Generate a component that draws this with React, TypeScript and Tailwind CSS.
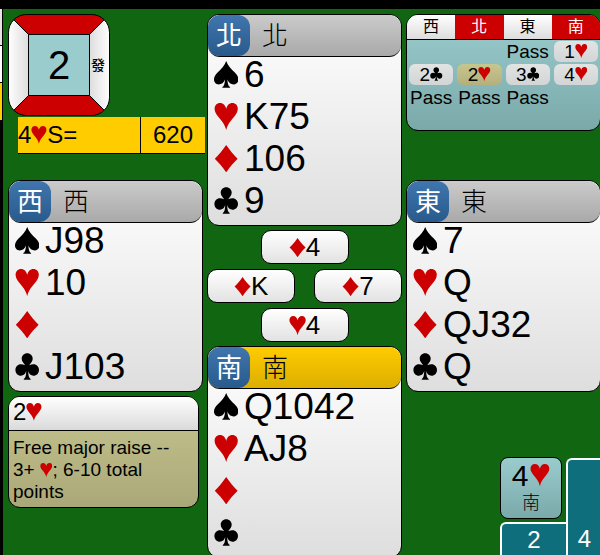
import React from 'react';

type Suit = 'S' | 'H' | 'D' | 'C';

const SUITS: Suit[] = ['S', 'H', 'D', 'C'];

const PIPS = {
  S: {
    label: 'spades',
    path: 'M12 0C13.5 4.5 17 7.5 20.5 11C22.8 13.3 24 15.3 24 17.6C24 20.3 22 22.3 19.4 22.3C16.6 22.3 14.2 20.6 13.2 17.6C13.3 21.5 14.2 24.2 15.8 24.7V25.5H8.2V24.7C9.8 24.2 10.7 21.5 10.8 17.6C9.8 20.6 7.4 22.3 4.6 22.3C2 22.3 0 20.3 0 17.6C0 15.3 1.2 13.3 3.5 11C7 7.5 10.5 4.5 12 0Z',
  },
  H: {
    label: 'hearts',
    path: 'M12 26C11 20.5 7.5 17 4.2 13C2 10.3 .6 8 .6 5.4C.6 2.3 2.8 0 6 0C9 0 11.2 2.2 12 5.6C12.8 2.2 15 0 18 0C21.2 0 23.4 2.3 23.4 5.4C23.4 8 22 10.3 19.8 13C16.5 17 13 20.5 12 26Z',
  },
  D: {
    label: 'diamonds',
    path: 'M12 0C15.5 5 19.5 9.5 23.2 13C19.5 16.5 15.5 21 12 26C8.5 21 4.5 16.5 .8 13C4.5 9.5 8.5 5 12 0Z',
  },
  C: {
    label: 'clubs',
    path: 'M12 .3C15.1 .3 17.4 2.6 17.4 5.5C17.4 7.9 15.7 9.5 14 11.6C15.5 10.9 16.8 10.6 18.2 10.6C21.3 10.6 23.6 13 23.6 16.1C23.6 19.3 21.2 21.6 18.2 21.6C15.6 21.6 13.7 20 13 17.2C13 21.3 13.8 24.2 15.4 24.8V25.5H8.6V24.8C10.2 24.2 11 21.3 11 17.2C10.3 20 8.4 21.6 5.8 21.6C2.8 21.6 .4 19.3 .4 16.1C.4 13 2.7 10.6 5.8 10.6C7.2 10.6 8.5 10.9 10 11.6C8.3 9.5 6.6 7.9 6.6 5.5C6.6 2.6 8.9 .3 12 .3Z',
  },
};

function Pip({ suit }: { suit: Suit }) {
  const red = suit === 'H' || suit === 'D';
  return (
    <svg
      viewBox="0 0 24 26"
      preserveAspectRatio="none"
      role="img"
      aria-label={PIPS[suit].label}
      className={
        red
          ? 'inline h-[0.74em] w-[0.66em] align-[-0.04em] text-[#cc0000]'
          : 'inline h-[0.74em] w-[0.66em] align-[-0.04em] text-black'
      }
    >
      <path d={PIPS[suit].path} fill="currentColor" />
    </svg>
  );
}

function Hand({ seat, cards, active = false }: { seat: string; cards: string[]; active?: boolean }) {
  return (
    <section className="shrink-0 overflow-hidden rounded-xl border border-black bg-linear-to-b from-white to-[#dedede]">
      <header
        className={
          active
            ? 'flex h-[42px] items-center rounded-xl border-b border-black bg-linear-to-b from-[#ffcc00] to-[#dcae00]'
            : 'flex h-[42px] items-center rounded-xl border-b border-black bg-linear-to-b from-[#cbcbcb] to-[#a9a9a9]'
        }
      >
        <span className="flex h-full w-[42px] items-center justify-center rounded-xl bg-linear-to-b from-[#4076ae] to-[#285a8c] text-[26px] leading-none text-white">
          {seat}
        </span>
        <h2 className="ml-3 text-[26px] leading-none font-light">{seat}</h2>
      </header>
      <ul className="pl-1.5">
        {SUITS.map((suit, i) => (
          <li key={suit} className="flex h-[42px] text-[37px] leading-[36px]">
            <span className="w-[30px]">
              <Pip suit={suit} />
            </span>
            <span>{cards[i]}</span>
          </li>
        ))}
      </ul>
    </section>
  );
}

function PlayedCard({ suit, rank }: { suit: Suit; rank: string }) {
  return (
    <div className="h-[34px] w-[88px] rounded-[10px] border border-black bg-linear-to-b from-white to-[#e2e2e2] text-center text-[26px] leading-8">
      <Pip suit={suit} />
      {rank}
    </div>
  );
}

function BoardTile() {
  return (
    <div className="relative grid size-[102px] shrink-0 grid-cols-[20px_1fr_20px] items-center text-center">
      <svg viewBox="0 0 102 102" className="absolute inset-0 size-full">
        <defs>
          <clipPath id="tile">
            <rect x="0.5" y="0.5" width="101" height="101" rx="18" />
          </clipPath>
          <linearGradient id="side" x1="0" x2="1" y1="0" y2="0">
            <stop offset="0" stopColor="#ffffff" />
            <stop offset="1" stopColor="#dddddd" />
          </linearGradient>
          <linearGradient id="sideRight" x1="0" x2="1" y1="0" y2="0">
            <stop offset="0" stopColor="#dddddd" />
            <stop offset="1" stopColor="#ffffff" />
          </linearGradient>
        </defs>
        <g clipPath="url(#tile)" stroke="#000" strokeWidth="1">
          <path d="M0 0H102L81.5 20.5H20.5Z" fill="#cc0000" />
          <path d="M0 102H102L81.5 81.5H20.5Z" fill="#cc0000" />
          <path d="M0 0L20.5 20.5V81.5L0 102Z" fill="url(#side)" />
          <path d="M102 0L81.5 20.5V81.5L102 102Z" fill="url(#sideRight)" />
          <path d="M20.5 20.5H81.5V81.5H20.5Z" fill="#9accce" />
        </g>
        <rect x="0.5" y="0.5" width="101" height="101" rx="18" fill="none" stroke="#000" />
      </svg>
      <span className="relative col-start-2 text-[40px] leading-none">2</span>
      <span className="relative pr-1 text-sm leading-none font-medium">發</span>
    </div>
  );
}

function Bid({ level, suit, selected = false }: { level: string; suit: Suit; selected?: boolean }) {
  return (
    <span
      className={
        selected
          ? 'block h-[21px] rounded-md bg-linear-to-b from-[#c6c68f] to-[#b4b07c]'
          : 'block h-[21px] rounded-md bg-linear-to-b from-[#e2e4e4] to-[#d2d5d5]'
      }
    >
      {level}
      <Pip suit={suit} />
    </span>
  );
}

function Auction() {
  const seats = ['西', '北', '東', '南'];
  const rows = [
    [null, null, 'Pass', <Bid level="1" suit="H" />],
    [<Bid level="2" suit="C" />, <Bid level="2" suit="H" selected />, <Bid level="3" suit="C" />, <Bid level="4" suit="H" />],
    ['Pass', 'Pass', 'Pass', null],
  ];
  return (
    <div className="h-[117px] shrink-0 overflow-hidden rounded-xl border border-black bg-linear-to-b from-[#9accce] to-[#7ba9aa]">
      <table className="w-full table-fixed border-collapse text-center text-[19px] leading-[21px]">
        <thead>
          <tr className="h-6">
            {seats.map((seat, i) => (
              <th
                key={seat}
                className={
                  i % 2
                    ? 'border-b border-black bg-[#cc0000] p-0 text-base font-normal text-white'
                    : 'border-b border-black bg-linear-to-b from-white to-[#dddddd] p-0 text-base font-normal'
                }
              >
                {seat}
              </th>
            ))}
          </tr>
        </thead>
        <tbody>
          {rows.map((row, r) => (
            <tr key={r} className="h-[23px]">
              {row.map((call, c) => (
                <td key={c} className="px-0.5 py-0">
                  {call}
                </td>
              ))}
            </tr>
          ))}
        </tbody>
      </table>
    </div>
  );
}

export default function App() {
  return (
    <div className="flex h-screen flex-col overflow-hidden bg-black pt-[9px] font-['Liberation_Sans','Noto_Sans_CJK_TC',sans-serif] text-black">
      <div className="flex min-h-0 flex-1">
        <div className="w-[3px] shrink-0 pr-px">
          <div className="h-[37px] border-b border-black bg-[#e4e4e4]" />
          <div className="h-[37px] border-b border-black bg-white" />
          <div className="h-[37px] bg-[#ffcc00]" />
        </div>

        <main className="-mr-px grid min-w-0 flex-1 grid-cols-3 gap-1 overflow-hidden bg-[#116611] pt-[5px] pl-[5px]">
          <div className="flex min-h-0 flex-col">
            <BoardTile />
            <div className="mt-px -mr-0.5 ml-2.5 flex h-[37px] shrink-0 items-center border-b border-black bg-[#ffcc00] text-2xl">
              <span className="flex-1">
                4<Pip suit="H" />S=
              </span>
              <span className="flex h-full w-[65px] items-center justify-center border-l border-black">620</span>
            </div>
            <div className="mt-[26px] flex flex-col gap-1">
              <Hand seat="西" cards={['J98', '10', '', 'J103']} />
              <aside className="mr-1 overflow-hidden rounded-xl border border-black bg-linear-to-b from-[#c6c690] to-[#aaa878]">
                <h3 className="h-[34px] border-b border-black bg-linear-to-b from-white to-[#dadada] pl-1 text-2xl leading-[30px]">
                  2<Pip suit="H" />
                </h3>
                <p className="px-1 pt-1.5 pb-1 text-[19px] leading-[22px]">
                  Free major raise -- 3+ <Pip suit="H" />; 6-10 total points
                </p>
              </aside>
            </div>
          </div>

          <div className="flex min-h-0 flex-col gap-1">
            <Hand seat="北" cards={['6', 'K75', '106', '9']} />
            <div className="flex shrink-0 flex-col items-center gap-[5px]">
              <PlayedCard suit="D" rank="4" />
              <div className="flex w-full justify-between">
                <PlayedCard suit="D" rank="K" />
                <PlayedCard suit="D" rank="7" />
              </div>
              <PlayedCard suit="H" rank="4" />
            </div>
            <Hand seat="南" cards={['Q1042', 'AJ8', '', '']} active />
          </div>

          <div className="flex min-h-0 flex-col">
            <Auction />
            <div className="mt-[49px]">
              <Hand seat="東" cards={['7', 'Q', 'QJ32', 'Q']} />
            </div>
            <div className="mt-auto flex items-end justify-end text-2xl text-white">
              <div className="w-[66px]">
                <div className="mr-1 mb-[3px] h-[62px] rounded-lg border border-black bg-linear-to-b from-[#9accce] to-[#7ba9aa] text-center text-black">
                  <div className="flex items-baseline justify-center gap-0.5 text-[30px] leading-9">
                    4<Pip suit="H" />
                  </div>
                  <div className="text-lg leading-[18px] font-light">南</div>
                </div>
                <div className="h-[33px] rounded-tl-md border-t-2 border-l-2 border-white bg-[#0f6e7c] text-center leading-[32px]">2</div>
              </div>
              <div className="flex h-[97px] w-[35px] items-end justify-center rounded-tl-md border-t-2 border-l-2 border-white bg-[#0f6e7c] leading-[32px]">
                4
              </div>
            </div>
          </div>
        </main>
      </div>
    </div>
  );
}
